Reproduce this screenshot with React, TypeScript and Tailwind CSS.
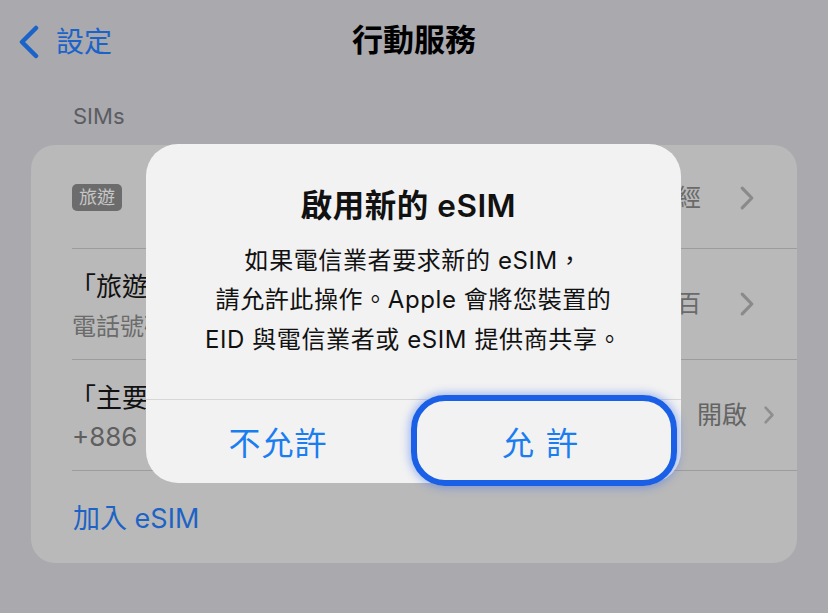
import React from "react";

const font = { fontFamily: 'Inter, "Noto Sans CJK TC", "Noto Sans", sans-serif' };

function Chevron({ className = "", color = "#8a8a8a", w = 16, h = 26, sw = 3.2 }: { className?: string; color?: string; w?: number; h?: number; sw?: number }) {
  return (
    <svg width={w} height={h} viewBox={`0 0 ${w} ${h}`} className={className}>
      <path d={`M${sw} ${sw} L${w - sw} ${h / 2} L${sw} ${h - sw}`} fill="none" stroke={color} strokeWidth={sw} strokeLinecap="round" strokeLinejoin="round" />
    </svg>
  );
}

export default function App() {
  return (
    <div className="relative w-[828px] h-[613px] overflow-hidden bg-[#a9a9ae]" style={font}>
      {/* Nav bar */}
      <div className="relative h-[85px] flex items-center">
        <div className="flex items-center pl-[18px] gap-[16px] mt-[-2px]">
          <svg width="22" height="34" viewBox="0 0 22 34">
            <path d="M18 3 L4 17 L18 31" fill="none" stroke="#1b63c9" strokeWidth="4.5" strokeLinecap="round" strokeLinejoin="round" />
          </svg>
          <span className="text-[28px] leading-none text-[#1b63c9]">設定</span>
        </div>
        <div className="absolute left-0 right-0 top-[24px] text-center text-[31px] leading-none font-semibold text-black">行動服務</div>
      </div>

      {/* Section header */}
      <div className="pl-[73px] h-[60px] text-[22px] leading-none text-[#5c5c61] pt-[20px]">SIMs</div>

      {/* Card */}
      <div className="mx-[31px] w-[766px] h-[418px] rounded-[24px] bg-[#b9b9b9] flex flex-col">
        <div className="h-[104px] ml-[41px] flex items-center border-b border-[#9c9c9c] pt-[2px]">
          <span className="px-[7px] h-[27px] flex items-center rounded-[5px] bg-[#6c6c6c] text-[#c6c6c6] text-[18px] leading-none">旅遊</span>
          <div className="ml-auto flex items-center">
            <span className="text-[24px] text-[#6a6a6a] leading-none">經</span>
            <Chevron className="ml-[38px] mr-[42px]" />
          </div>
        </div>
        <div className="h-[111px] ml-[41px] flex items-center border-b border-[#9c9c9c]">
          <div className="flex flex-col pt-[4px]">
            <span className="text-[26px] leading-none text-[#111] ml-[-2px]">「旅遊卡</span>
            <span className="text-[24px] leading-none text-[#6b6b6b] mt-[15px]">電話號碼</span>
          </div>
          <div className="ml-auto flex items-center">
            <span className="text-[24px] text-[#6a6a6a] leading-none">百</span>
            <Chevron className="ml-[38px] mr-[42px]" />
          </div>
        </div>
        <div className="h-[111px] ml-[41px] flex items-center border-b border-[#9c9c9c]">
          <div className="flex flex-col pt-[4px]">
            <span className="text-[26px] leading-none text-[#111] ml-[-2px]">「主要」</span>
            <span className="text-[26px] leading-none text-[#5f5f5f] mt-[13px]">+886</span>
          </div>
          <div className="ml-auto flex items-center">
            <span className="text-[25px] text-[#646464] leading-none">開啟</span>
            <Chevron className="ml-[16px] mr-[22px]" w={12} h={20} sw={2.6} color="#8e8e8e" />
          </div>
        </div>
        <div className="flex-1 ml-[42px] flex items-center pt-[2px]">
          <span className="text-[27px] leading-none text-[#1d63c6]">加入 eSIM</span>
        </div>
      </div>

      {/* Alert */}
      <div className="absolute left-[146px] top-[144px] w-[535px] h-[339px] rounded-[32px] bg-[#f2f2f2] flex flex-col">
        <div className="flex-1 flex flex-col items-center pt-[46px]">
          <div className="text-[31.5px] leading-none font-semibold text-[#111] tracking-[0.5px] pr-[10px]">啟用新的 eSIM</div>
          <div className="mt-[19px] text-[24px] leading-[39.5px] text-[#111] text-center tracking-[0.6px]">
            如果電信業者要求新的 eSIM，
            <br />
            請允許此操作。Apple 會將您裝置的
            <br />
            EID 與電信業者或 eSIM 提供商共享。
          </div>
        </div>
        <div className="h-[84px] border-t border-[#d6d6d6] flex">
          <div className="flex-1 flex items-center justify-center text-[32px] leading-none text-[#1a7df0] tracking-[1px] pr-[4px] pt-[4px]">不允許</div>
          <div className="flex-1 flex items-center justify-center text-[32px] leading-none text-[#1a7df0] tracking-[12px] pr-[3px] pt-[4px]">允許</div>
        </div>
      </div>

      {/* Focus ring */}
      <div className="absolute left-[411px] top-[395px] w-[266px] h-[91px] rounded-[34px] border-[6px] border-[#1a60e6] shadow-[0_0_8px_2px_rgba(60,110,240,0.45)]" />
    </div>
  );
}
